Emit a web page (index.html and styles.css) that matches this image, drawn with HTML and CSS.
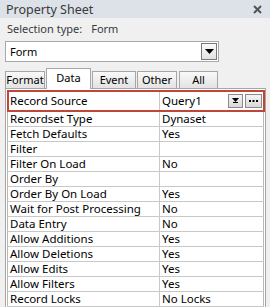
FILE: index.html
```html
<!DOCTYPE html>
<html lang="en">
<head>
    <meta charset="UTF-8">
    <title>Property Sheet</title>
    <link rel="stylesheet" href="styles.css">
</head>
<body>
    <div class="titlebar">
        <span class="title">Property Sheet</span>
        <svg class="close" width="9" height="9" viewBox="0 0 9 9">
            <path d="M1 1 L8 8 M8 1 L1 8" stroke="#555" stroke-width="2"/>
        </svg>
    </div>

    <div class="seltype">Selection type:<span class="seltype-value">Form</span></div>

    <div class="combo">
        <span class="combo-text">Form</span>
        <span class="combo-btn">
            <svg width="9" height="5" viewBox="0 0 9 5"><path d="M0 0 H9 L4.5 5 Z" fill="#000"/></svg>
        </span>
    </div>

    <div class="tabs">
        <div class="tab tab-format">Format</div>
        <div class="tab tab-data active">Data</div>
        <div class="tab tab-event">Event</div>
        <div class="tab tab-other">Other</div>
        <div class="tab tab-all">All</div>
    </div>

    <div class="panel">
        <table class="props">
            <tr class="selected">
                <td class="name">Record Source</td>
                <td class="value">
                    <div class="value-wrap">
                        <span>Query1</span>
                        <span class="mini-btn drop">
                            <svg width="7" height="5" viewBox="0 0 7 5"><path d="M0 0 H7 L3.5 4 Z" fill="#000"/><path d="M1 4.5 H6" stroke="#000" stroke-width="1"/></svg>
                        </span>
                        <span class="mini-btn dots">
                            <svg width="9" height="2" viewBox="0 0 9 2"><rect x="0" y="0" width="2" height="2" fill="#000"/><rect x="3.5" y="0" width="2" height="2" fill="#000"/><rect x="7" y="0" width="2" height="2" fill="#000"/></svg>
                        </span>
                    </div>
                </td>
            </tr>
            <tr><td class="name">Recordset Type</td><td class="value">Dynaset</td></tr>
            <tr><td class="name">Fetch Defaults</td><td class="value">Yes</td></tr>
            <tr><td class="name">Filter</td><td class="value"></td></tr>
            <tr><td class="name">Filter On Load</td><td class="value">No</td></tr>
            <tr><td class="name">Order By</td><td class="value"></td></tr>
            <tr><td class="name">Order By On Load</td><td class="value">Yes</td></tr>
            <tr><td class="name">Wait for Post Processing</td><td class="value">No</td></tr>
            <tr><td class="name">Data Entry</td><td class="value">No</td></tr>
            <tr><td class="name">Allow Additions</td><td class="value">Yes</td></tr>
            <tr><td class="name">Allow Deletions</td><td class="value">Yes</td></tr>
            <tr><td class="name">Allow Edits</td><td class="value">Yes</td></tr>
            <tr><td class="name">Allow Filters</td><td class="value">Yes</td></tr>
            <tr><td class="name">Record Locks</td><td class="value">No Locks</td></tr>
        </table>
    </div>
</body>
</html>
```

FILE: styles.css
```css
* {
    box-sizing: border-box;
}
body {
    margin: 0;
    width: 270px;
    height: 307px;
    overflow: hidden;
    background-color: #f0f0f0;
    font-family: "Noto Sans", "Open Sans", sans-serif;
    font-size: 11.5px;
    color: #000;
}
.titlebar {
    height: 18px;
    background-color: #dde2e8;
    display: flex;
    align-items: center;
    justify-content: space-between;
    padding: 0 8px 0 6px;
}
.title {
    font-size: 12.5px;
    color: #3a3a3a;
}
.seltype {
    height: 23px;
    padding: 3px 7px 0;
    font-size: 11px;
    color: #3a3a3a;
}
.seltype-value {
    margin-left: 9px;
}
.combo {
    margin-left: 5px;
    width: 214px;
    height: 21px;
    background-color: #fff;
    border: 1px solid #a9a9a9;
    display: flex;
    align-items: center;
    justify-content: space-between;
    padding: 0 1px 0 4px;
    font-size: 11px;
}
.combo-btn {
    width: 16px;
    height: 17px;
    border: 1px solid #7a7a7a;
    background: linear-gradient(#fafafa, #e2e2e2);
    display: flex;
    align-items: center;
    justify-content: center;
}
.tabs {
    display: flex;
    align-items: flex-end;
    height: 25px;
    padding-left: 5px;
    margin-top: 1px;
    gap: 1px;
}
.tab {
    height: 17px;
    border: 1px solid #a6a6a6;
    border-bottom: none;
    background: linear-gradient(#f9f9f9, #e3e3e3);
    text-align: center;
    line-height: 16px;
    font-size: 11px;
}
.tab.active {
    height: 21px;
    background: #fff;
    position: relative;
    top: 1px;
    line-height: 17px;
}
.tab-format { width: 40px; }
.tab-data { width: 45px; }
.tab-event { width: 44px; }
.tab-other { width: 40px; }
.tab-all { width: 39px; margin-left: 1px; }
.panel {
    margin-left: 5px;
    width: 261px;
    height: 222px;
    border: 1px solid #a6a6a6;
    background-color: #fff;
    padding: 1px 1px 0 1px;
}
.props {
    width: 257px;
    border-collapse: collapse;
    border-left: 1px solid #b8b8b8;
    border-right: 1px solid #b8b8b8;
    margin-top: 1px;
}
.props td {
    height: 15px;
    padding: 0 0 0 2px;
    border-bottom: 1px solid #c8c8c8;
    white-space: nowrap;
    line-height: 14px;
}
.props td.name {
    width: 152px;
    border-right: 1px solid #c8c8c8;
}
.props tr.selected td {
    height: 20px;
}
.props tr.selected {
    outline: 2px solid #c0463a;
    outline-offset: -1px;
}
.value-wrap {
    display: flex;
    align-items: center;
    gap: 2px;
}
.value-wrap span:first-child {
    flex: 1;
}
.mini-btn {
    height: 14px;
    border: 1px solid #8a8a8a;
    background: linear-gradient(#f6f6f6, #d8d8d8);
    display: flex;
    align-items: center;
    justify-content: center;
}
.mini-btn.drop { width: 15px; }
.mini-btn.dots { width: 17px; margin-right: 1px; }
```
